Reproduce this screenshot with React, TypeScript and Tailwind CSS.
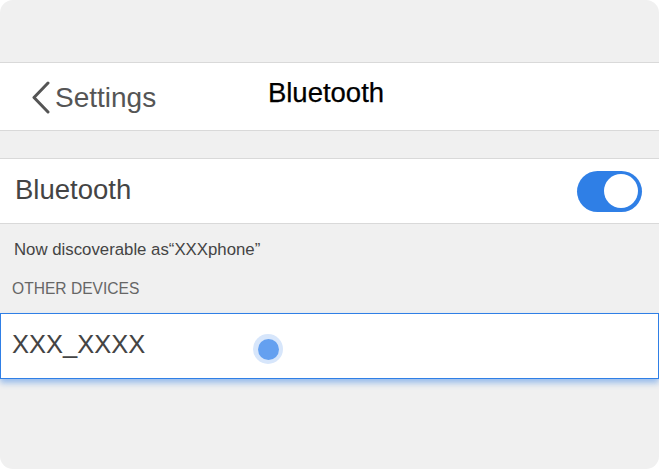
import React from "react";

export default function App() {
  return (
    <div className="w-[659px] h-[469px] bg-white font-['Liberation_Sans',Arial,sans-serif]">
      <div className="h-full rounded-[13px] bg-[#f0f0f0] overflow-hidden flex flex-col">
        <div className="h-[62px] shrink-0" />

        {/* Navigation bar */}
        <div className="h-[69px] shrink-0 grid grid-cols-[1fr_auto_1fr] items-center bg-white border-y border-[#d9d9d9]">
          <div className="flex items-center pl-[31px] text-[#555]">
            <svg width="19" height="33" viewBox="0 0 19 33" fill="none" className="mt-[1px]">
              <path d="M17 2 L3 16.5 L17 31" stroke="#555" strokeWidth="3" strokeLinecap="round" strokeLinejoin="round" />
            </svg>
            <span className="ml-[5px] text-[28px] leading-none mt-[2px]">Settings</span>
          </div>
          <div className="mr-[7px] text-[27.5px] text-black leading-none -mt-[7px] [-webkit-text-stroke:0.25px_#000]">Bluetooth</div>
          <div />
        </div>

        <div className="h-[27px] shrink-0" />

        {/* Bluetooth toggle row */}
        <div className="h-[66px] shrink-0 flex items-center justify-between bg-white border-y border-[#d9d9d9] pl-[15px] pr-[17px]">
          <span className="text-[27.5px] text-[#444] leading-none -mt-[3px]">Bluetooth</span>
          <div className="w-[65px] h-[41px] rounded-full bg-[#2f7fe6] flex items-center justify-end pr-[4px]">
            <div className="w-[34px] h-[34px] rounded-full bg-white" />
          </div>
        </div>

        <div className="h-[51px] shrink-0 flex items-center pl-[14px] text-[16.8px] text-[#444]">
          Now discoverable as“XXXphone”
        </div>
        <div className="h-[28px] shrink-0 flex items-center pl-[12px] text-[15.6px] text-[#666]">
          OTHER DEVICES
        </div>
        <div className="h-[10px] shrink-0" />

        {/* Selected device row */}
        <div className="relative h-[66px] shrink-0 flex items-center bg-white border border-[#2f7fe6] pl-[11px] shadow-[0_4px_6px_rgba(47,127,230,0.45)]">
          <span className="text-[25.5px] text-[#444] leading-none -mt-[2px]">XXX_XXXX</span>
          <div className="absolute left-[252px] top-[20px] w-[30px] h-[30px] rounded-full bg-[#d7e6fb] flex items-center justify-center">
            <div className="w-[21px] h-[21px] rounded-full bg-[#64a0f0]" />
          </div>
        </div>
      </div>
    </div>
  );
}
